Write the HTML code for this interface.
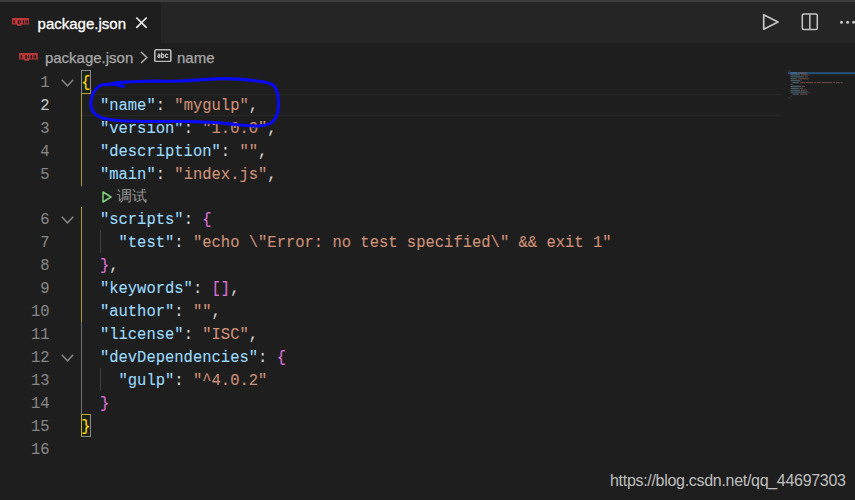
<!DOCTYPE html>
<html><head><meta charset="utf-8">
<style>
*{margin:0;padding:0;box-sizing:border-box}
html,body{width:855px;height:500px;overflow:hidden;background:#1e1e1e}
body{position:relative;font-family:"Liberation Sans",sans-serif}
.abs{position:absolute}
#topstrip{left:0;top:0;width:855px;height:2px;background:#3c3c3c}
#tabbar{left:0;top:2px;width:855px;height:41px;background:#252526}
#tab{left:0;top:2px;width:161px;height:41px;background:#1e1e1e}
.ui{font-size:15px;white-space:pre}
#tabtxt{left:37.6px;top:15px;-webkit-text-stroke:0.3px #fff;color:#ffffff;line-height:18px}
#bctxt{left:44.9px;top:48.6px;-webkit-text-stroke:0.25px #a9a9a9;color:#a9a9a9;line-height:18px}
#bcname{left:177px;top:48.6px;-webkit-text-stroke:0.25px #a9a9a9;color:#a9a9a9;line-height:18px}
.row{position:absolute;left:0;width:855px;height:23px}
.ln{position:absolute;left:0;top:2px;transform:scaleY(1.12);transform-origin:0 15px;-webkit-text-stroke:0.1px currentColor;width:49.5px;text-align:right;font-family:"Liberation Mono",monospace;font-size:15.5px;line-height:23px;color:#858585;white-space:pre}
.code{position:absolute;left:81.3px;top:2px;transform:scaleY(1.12);transform-origin:0 15px;-webkit-text-stroke:0.1px currentColor;font-family:"Liberation Mono",monospace;font-size:15.5px;line-height:23px;color:#d4d4d4;white-space:pre}
.k{color:#9cdcfe}.s{color:#ce9178}.g{color:#ffd700}.o{color:#da70d6}
.fold{position:absolute;left:61px;width:13px;height:8px}
#wm{left:610px;top:472.2px;font-size:16px;letter-spacing:-0.3px;color:#bfbfbf;line-height:18px;white-space:pre}
</style></head><body>
<div class="abs" id="topstrip"></div>
<div class="abs" id="tabbar"></div>
<div class="abs" id="tab"></div>

<!-- npm icon tab -->
<svg class="abs" style="left:11.5px;top:18.3px" width="17.7" height="7.7" viewBox="0 0 18 7" preserveAspectRatio="none"><path d="M0.3,0h17.4q0.3,0 0.3,0.3v5.7H9.5v1H5V6H0.3q-0.3,0-0.3-0.3V0.3q0-0.3,0.3-0.3z" fill="#c03838"/><rect x="1.6" y="2" width="1.3" height="3" fill="#141414"/><rect x="6.1" y="2" width="1.3" height="3.5" fill="#141414"/><rect x="8.5" y="2" width="0.8" height="2.6" fill="#141414"/><rect x="11.1" y="2" width="1.3" height="3" fill="#141414"/><rect x="13.8" y="2" width="1.0" height="3" fill="#141414"/><rect x="15.4" y="2" width="1.0" height="3" fill="#141414"/></svg>
<div class="abs ui" id="tabtxt">package.json</div>
<svg class="abs" style="left:135px;top:16px" width="13" height="13" viewBox="0 0 13 13">
<path d="M1.3 1.5L11.7 11.9M11.7 1.5L1.3 11.9" stroke="#e8e8e8" stroke-width="1.7"/>
</svg>

<!-- right action icons -->
<svg class="abs" style="left:762px;top:13px" width="18" height="18" viewBox="0 0 18 18">
<path d="M1.7 1.8L16 9L1.7 16.2Z" fill="none" stroke="#c5c5c5" stroke-width="1.7" stroke-linejoin="round"/>
</svg>
<svg class="abs" style="left:801px;top:13px" width="18" height="18" viewBox="0 0 18 18">
<rect x="1.3" y="1.1" width="15" height="15.3" rx="1.5" fill="none" stroke="#c5c5c5" stroke-width="1.5"/>
<path d="M8.8 1.1V16.4" stroke="#c5c5c5" stroke-width="1.5"/>
</svg>
<svg class="abs" style="left:836px;top:19px" width="19" height="6" viewBox="0 0 19 6">
<circle cx="5.5" cy="3.2" r="1.5" fill="#c5c5c5"/><circle cx="11.6" cy="3.2" r="1.5" fill="#c5c5c5"/><circle cx="17.6" cy="3.2" r="1.5" fill="#c5c5c5"/>
</svg>

<!-- breadcrumb -->
<svg class="abs" style="left:19px;top:53.1px" width="18.9" height="7.7" viewBox="0 0 18 7" preserveAspectRatio="none"><path d="M0.3,0h17.4q0.3,0 0.3,0.3v5.7H9.5v1H5V6H0.3q-0.3,0-0.3-0.3V0.3q0-0.3,0.3-0.3z" fill="#b53838"/><rect x="1.6" y="2" width="1.3" height="3" fill="#141414"/><rect x="6.1" y="2" width="1.3" height="3.5" fill="#141414"/><rect x="8.5" y="2" width="0.8" height="2.6" fill="#141414"/><rect x="11.1" y="2" width="1.3" height="3" fill="#141414"/><rect x="13.8" y="2" width="1.0" height="3" fill="#141414"/><rect x="15.4" y="2" width="1.0" height="3" fill="#141414"/></svg>
<div class="abs ui" id="bctxt">package.json</div>
<svg class="abs" style="left:140px;top:50.5px" width="8" height="13" viewBox="0 0 8 13">
<path d="M1 1L6.8 6.5L1 12" fill="none" stroke="#b0b0b0" stroke-width="1.5"/>
</svg>
<svg class="abs" style="left:154.2px;top:48.6px" width="17.6" height="13.4" viewBox="0 0 17.6 13.4">
<rect x="0.8" y="0.8" width="16" height="11.8" rx="1.4" fill="none" stroke="#b8b8b8" stroke-width="1.6"/>
<g fill="none" stroke="#c4c4c4" stroke-width="1.15" stroke-linecap="round">
<path d="M4.1 5.2Q5.9 4.7 5.9 6.1V8.6M5.9 6.7Q3.6 6.5 3.7 7.6Q3.9 8.8 5.9 8.0"/>
<path d="M7.6 3.9V8.6M7.6 6.0Q8.6 4.9 9.6 5.5Q10.3 6.4 9.8 7.9Q8.9 9.0 7.6 8.2"/>
<path d="M13.8 5.4Q12.4 4.6 11.7 5.6Q11.1 6.7 11.7 7.8Q12.5 8.9 13.9 8.0"/>
</g></svg>
<div class="abs ui" id="bcname">name</div>

<!-- current line highlight -->
<div class="abs" style="left:80px;top:93.8px;width:701px;height:22.2px;border-top:1.6px solid #282828;border-bottom:1.6px solid #282828"></div>

<!-- indent guides -->
<div class="abs" style="left:81.3px;top:93.6px;width:1.2px;height:92px;background:#ab9c38"></div>
<div class="abs" style="left:81.3px;top:207.3px;width:1.2px;height:115px;background:#ab9c38"></div>
<div class="abs" style="left:81.3px;top:322.3px;width:1.2px;height:92px;background:#6e6e6e"></div>
<div class="abs" style="left:99.6px;top:230.3px;width:1.2px;height:23px;background:#404040"></div>
<div class="abs" style="left:99.6px;top:368.3px;width:1.2px;height:23px;background:#404040"></div>

<!-- bracket match boxes -->
<div class="abs" style="left:81.1px;top:70.4px;width:9.9px;height:23.2px;border:1.2px solid #8a8a8a;border-bottom-color:#b5a040;background:#1a231a"></div>
<div class="abs" style="left:81.1px;top:414.1px;width:9.9px;height:23.2px;border:1.2px solid #8a8a8a;border-top-color:#c8ac30;border-left-color:#c8ac30;background:#1a231a"></div>

<div id="lines">
<div class="row" style="top:70px"><span class="ln">1</span><span class="code"><span class="g">{</span></span></div>
<div class="row" style="top:93px"><span class="ln" style="color:#c6c6c6">2</span><span class="code">  <span class="k">"name"</span>: <span class="s">"mygulp"</span>,</span></div>
<div class="row" style="top:116px"><span class="ln">3</span><span class="code">  <span class="k">"version"</span>: <span class="s">"1.0.0"</span>,</span></div>
<div class="row" style="top:139px"><span class="ln">4</span><span class="code">  <span class="k">"description"</span>: <span class="s">""</span>,</span></div>
<div class="row" style="top:162px"><span class="ln">5</span><span class="code">  <span class="k">"main"</span>: <span class="s">"index.js"</span>,</span></div>
<div class="row" style="top:207.3px"><span class="ln">6</span><span class="code">  <span class="k">"scripts"</span>: <span class="o">{</span></span></div>
<div class="row" style="top:230.3px"><span class="ln">7</span><span class="code">    <span class="k">"test"</span>: <span class="s">"echo \"Error: no test specified\" &amp;&amp; exit 1"</span></span></div>
<div class="row" style="top:253.3px"><span class="ln">8</span><span class="code">  <span class="o">}</span>,</span></div>
<div class="row" style="top:276.3px"><span class="ln">9</span><span class="code">  <span class="k">"keywords"</span>: <span class="o">[]</span>,</span></div>
<div class="row" style="top:299.3px"><span class="ln">10</span><span class="code">  <span class="k">"author"</span>: <span class="s">""</span>,</span></div>
<div class="row" style="top:322.3px"><span class="ln">11</span><span class="code">  <span class="k">"license"</span>: <span class="s">"ISC"</span>,</span></div>
<div class="row" style="top:345.3px"><span class="ln">12</span><span class="code">  <span class="k">"devDependencies"</span>: <span class="o">{</span></span></div>
<div class="row" style="top:368.3px"><span class="ln">13</span><span class="code">    <span class="k">"gulp"</span>: <span class="s">"^4.0.2"</span></span></div>
<div class="row" style="top:391.3px"><span class="ln">14</span><span class="code">  <span class="o">}</span></span></div>
<div class="row" style="top:414.3px"><span class="ln">15</span><span class="code"><span class="g">}</span></span></div>
<div class="row" style="top:437.3px"><span class="ln">16</span></div>
</div>

<!-- fold chevrons -->
<svg class="fold" style="top:78.8px" viewBox="0 0 13 8"><path d="M0.8 0.8L6.5 6.8L12.2 0.8" fill="none" stroke="#858585" stroke-width="1.5"/></svg>
<svg class="fold" style="top:215.5px" viewBox="0 0 13 8"><path d="M0.8 0.8L6.5 6.8L12.2 0.8" fill="none" stroke="#858585" stroke-width="1.5"/></svg>
<svg class="fold" style="top:353.5px" viewBox="0 0 13 8"><path d="M0.8 0.8L6.5 6.8L12.2 0.8" fill="none" stroke="#858585" stroke-width="1.5"/></svg>

<!-- codelens -->
<svg class="abs" style="left:102px;top:190.5px" width="10" height="12" viewBox="0 0 10 12">
<path d="M1 1L9 6L1 11Z" fill="none" stroke="#7ccf7c" stroke-width="1.5" stroke-linejoin="round"/>
</svg>
<div class="abs" style="left:117.3px;top:186.7px;font-size:14.5px;line-height:18px;color:#999999;white-space:pre">调试</div>

<!-- minimap -->
<svg class="abs" style="left:787px;top:70px" width="68" height="32" viewBox="0 0 68 32"><rect x="1" y="2.1" width="67" height="2.1" fill="#264f78"/><g opacity="0.5"><rect x="1.70" y="0.40" width="0.94" height="1.2" fill="#a89a4a"/><rect x="3.59" y="2.33" width="5.66" height="1.2" fill="#6f9db5"/><rect x="9.25" y="2.33" width="0.94" height="1.2" fill="#8a8a8a"/><rect x="11.14" y="2.33" width="7.55" height="1.2" fill="#a3735f"/><rect x="18.69" y="2.33" width="0.94" height="1.2" fill="#8a8a8a"/><rect x="3.59" y="4.26" width="8.50" height="1.2" fill="#6f9db5"/><rect x="12.08" y="4.26" width="0.94" height="1.2" fill="#8a8a8a"/><rect x="13.97" y="4.26" width="6.61" height="1.2" fill="#a3735f"/><rect x="20.58" y="4.26" width="0.94" height="1.2" fill="#8a8a8a"/><rect x="3.59" y="6.19" width="12.27" height="1.2" fill="#6f9db5"/><rect x="15.86" y="6.19" width="0.94" height="1.2" fill="#8a8a8a"/><rect x="17.75" y="6.19" width="1.89" height="1.2" fill="#a3735f"/><rect x="19.64" y="6.19" width="0.94" height="1.2" fill="#8a8a8a"/><rect x="3.59" y="8.12" width="5.66" height="1.2" fill="#6f9db5"/><rect x="9.25" y="8.12" width="0.94" height="1.2" fill="#8a8a8a"/><rect x="11.14" y="8.12" width="9.44" height="1.2" fill="#a3735f"/><rect x="20.58" y="8.12" width="0.94" height="1.2" fill="#8a8a8a"/><rect x="3.59" y="10.05" width="8.50" height="1.2" fill="#6f9db5"/><rect x="12.08" y="10.05" width="0.94" height="1.2" fill="#8a8a8a"/><rect x="13.97" y="10.05" width="0.94" height="1.2" fill="#9a609a"/><rect x="5.48" y="11.98" width="5.66" height="1.2" fill="#6f9db5"/><rect x="11.14" y="11.98" width="0.94" height="1.2" fill="#8a8a8a"/><rect x="13.03" y="11.98" width="4.72" height="1.2" fill="#a3735f"/><rect x="18.69" y="11.98" width="7.55" height="1.2" fill="#a3735f"/><rect x="27.19" y="11.98" width="1.89" height="1.2" fill="#a3735f"/><rect x="30.02" y="11.98" width="3.78" height="1.2" fill="#a3735f"/><rect x="34.74" y="11.98" width="10.38" height="1.2" fill="#a3735f"/><rect x="46.07" y="11.98" width="1.89" height="1.2" fill="#a3735f"/><rect x="48.90" y="11.98" width="3.78" height="1.2" fill="#a3735f"/><rect x="53.62" y="11.98" width="1.89" height="1.2" fill="#a3735f"/><rect x="3.59" y="13.91" width="0.94" height="1.2" fill="#9a609a"/><rect x="4.53" y="13.91" width="0.94" height="1.2" fill="#8a8a8a"/><rect x="3.59" y="15.84" width="9.44" height="1.2" fill="#6f9db5"/><rect x="13.03" y="15.84" width="0.94" height="1.2" fill="#8a8a8a"/><rect x="14.92" y="15.84" width="1.89" height="1.2" fill="#9a609a"/><rect x="16.80" y="15.84" width="0.94" height="1.2" fill="#8a8a8a"/><rect x="3.59" y="17.77" width="7.55" height="1.2" fill="#6f9db5"/><rect x="11.14" y="17.77" width="0.94" height="1.2" fill="#8a8a8a"/><rect x="13.03" y="17.77" width="1.89" height="1.2" fill="#a3735f"/><rect x="14.92" y="17.77" width="0.94" height="1.2" fill="#8a8a8a"/><rect x="3.59" y="19.70" width="8.50" height="1.2" fill="#6f9db5"/><rect x="12.08" y="19.70" width="0.94" height="1.2" fill="#8a8a8a"/><rect x="13.97" y="19.70" width="4.72" height="1.2" fill="#a3735f"/><rect x="18.69" y="19.70" width="0.94" height="1.2" fill="#8a8a8a"/><rect x="3.59" y="21.63" width="16.05" height="1.2" fill="#6f9db5"/><rect x="19.64" y="21.63" width="0.94" height="1.2" fill="#8a8a8a"/><rect x="21.52" y="21.63" width="0.94" height="1.2" fill="#9a609a"/><rect x="5.48" y="23.56" width="5.66" height="1.2" fill="#6f9db5"/><rect x="11.14" y="23.56" width="0.94" height="1.2" fill="#8a8a8a"/><rect x="13.03" y="23.56" width="7.55" height="1.2" fill="#a3735f"/><rect x="3.59" y="25.49" width="0.94" height="1.2" fill="#9a609a"/><rect x="1.70" y="27.42" width="0.94" height="1.2" fill="#a89a4a"/></g></svg>

<!-- blue annotation -->
<svg class="abs" style="left:0;top:0" width="855" height="500" viewBox="0 0 855 500">
<path d="M123.4 86.6 C122.3 86.3 119.2 85.0 117.0 84.6 C114.8 84.2 112.9 84.0 110.0 84.2 C107.1 84.4 102.3 84.2 99.4 86.0 C96.5 87.8 93.9 91.7 92.5 95.0 C91.1 98.3 90.7 102.5 91.0 105.6 C91.3 108.7 92.6 111.4 94.6 113.5 C96.6 115.6 99.6 117.1 103.0 118.2 C106.4 119.3 110.0 119.7 115.0 120.2 C120.0 120.7 125.5 121.1 133.0 121.3 C140.5 121.5 150.0 121.5 160.0 121.5 C170.0 121.5 183.2 121.4 193.0 121.6 C202.8 121.8 211.1 122.3 218.6 122.8 C226.1 123.3 231.6 124.3 238.0 124.8 C244.4 125.3 251.9 126.2 257.2 126.0 C262.5 125.8 266.8 125.2 270.0 123.5 C273.2 121.8 275.1 119.0 276.5 115.8 C277.9 112.6 278.4 108.1 278.5 104.2 C278.6 100.3 278.2 95.8 277.2 92.6 C276.2 89.4 276.0 86.8 272.7 84.9 C269.4 83.0 265.1 82.0 257.2 81.0 C249.2 80.0 237.9 78.6 225.0 78.6 C212.1 78.6 193.3 80.6 180.0 81.0 C166.7 81.4 154.8 81.0 145.0 81.2 C135.2 81.4 127.2 81.9 121.0 82.4 C114.8 83.0 110.2 84.2 108.0 84.5" fill="none" stroke="#0a0af0" stroke-width="3.1" stroke-linecap="round"/>
</svg>

<div class="abs" id="wm">https://blog.csdn.net/qq_44697303</div>
</body></html>
